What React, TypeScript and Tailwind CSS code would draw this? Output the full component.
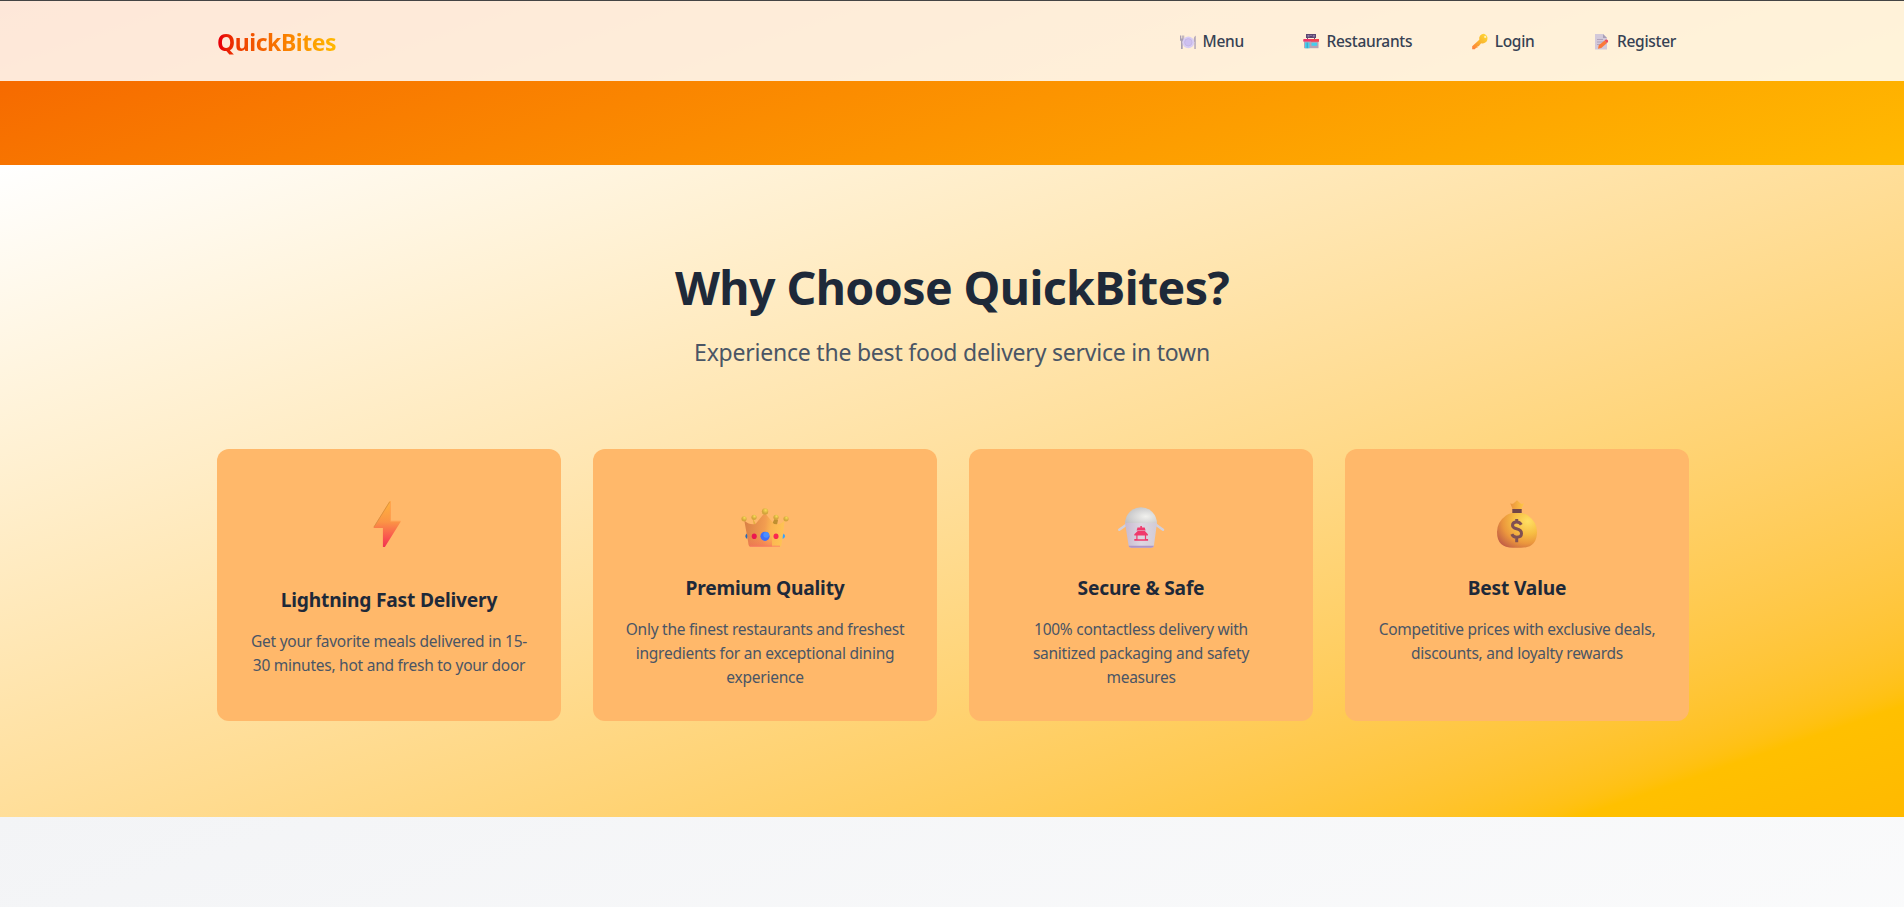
import React from "react";

const nav = [
  { label: "Menu", icon: <PlateIcon /> },
  { label: "Restaurants", icon: <ShopIcon /> },
  { label: "Login", icon: <KeyIcon /> },
  { label: "Register", icon: <MemoIcon /> },
];

const features = [
  { title: "Lightning Fast Delivery", text: "Get your favorite meals delivered in 15-\n30 minutes, hot and fresh to your door", icon: <BoltIcon />, gap: "mb-[38px]" },
  { title: "Premium Quality", text: "Only the finest restaurants and freshest\ningredients for an exceptional dining\nexperience", icon: <CrownIcon />, gap: "mb-[26px]" },
  { title: "Secure & Safe", text: "100% contactless delivery with\nsanitized packaging and safety\nmeasures", icon: <TakeoutIcon />, gap: "mb-[26px]" },
  { title: "Best Value", text: "Competitive prices with exclusive deals,\ndiscounts, and loyalty rewards", icon: <MoneyBagIcon />, gap: "mb-[26px]" },
];

function PlateIcon() {
  return (
    <svg viewBox="0 0 18 18" className="h-[18px] w-[18px]">
      <path d="M1 2.500v4.500q0 1 1 1V16h1.700V8q1.500 0 1.500-1V2.500H4.300v3h-.6v-3h-.9v3h-.7v-3z" fill="#aaa0b2" />
      <path d="M15.300 16V9q-.6-.5-.6-2.500 0-3 2.100-4V16z" fill="#b5a8b8" />
      <circle cx="9.300" cy="9.300" r="5.900" fill="#d9cdf4" />
      <circle cx="9.300" cy="9.300" r="3.700" fill="#cec0f1" stroke="#bfb2e0" strokeWidth=".7" />
    </svg>
  );
}

function ShopIcon() {
  return (
    <svg viewBox="0 0 18 18" className="h-[18px] w-[18px]">
      <path d="M5 4h1v3H5zM12 4h1v3h-1z" fill="#6b5876" />
      <rect x="4" y="1" width="10" height="4" fill="#5b4670" />
      <path d="M5.500 2.500h2M8.200 2.500h1.600M10.800 2.500h2M5.500 3.700h2M10.800 3.700h2" stroke="#a894bd" strokeWidth=".7" />
      <rect x="2" y="7.500" width="14.500" height="7.700" fill="#b7a3b5" />
      <path d="M1.500 6h15.500v2.500H1z" fill="#f0376a" />
      <path d="M9 6h8v2.500H9z" fill="#f4434f" />
      <path d="M3 9.500h4.500v5.700H3zM9.500 9.800h5.600v3H9.500z" fill="#45cfee" />
      <path d="M5.200 9.500v5.700" stroke="#3787b0" strokeWidth=".7" />
    </svg>
  );
}

function KeyIcon() {
  return (
    <svg viewBox="0 0 18 18" className="h-[18px] w-[18px]">
      <defs>
        <linearGradient id="key" x1="1" y1="0" x2="0" y2="1">
          <stop stopColor="#ffdc37" />
          <stop offset=".5" stopColor="#f9b52e" />
          <stop offset="1" stopColor="#ff7b3f" />
        </linearGradient>
      </defs>
      <path d="M13 .7a4.800 4.800 0 0 0-4.700 6L1.200 13.300v3h2.600l1.300-1.500h1.400v-1.600h1.300l2.300-3A4.800 4.800 0 1 0 13 .7z" fill="url(#key)" />
      <circle cx="14.200" cy="3.900" r="1.100" fill="#fff0bc" />
    </svg>
  );
}

function MemoIcon() {
  return (
    <svg viewBox="0 0 18 18" className="h-[18px] w-[18px]">
      <path d="M2 1h8l4 4v11.500H2z" fill="#d3c9da" />
      <path d="M10 1v4h4z" fill="#a99fb7" />
      <path d="M4 6.500h6M4 9h7M4 11.500h3" stroke="#aa9bb4" strokeWidth=".8" />
      <path d="m5 15.700.7-3.400 6-4.900 2.300 2.600-5.700 4.900z" fill="#fb7939" />
      <path d="m11.600 7.500 1.200-.9q1-.5 1.900.4t.2 2.200l-1.100.9z" fill="#ef4d5a" />
    </svg>
  );
}

function BoltIcon() {
  return (
    <svg viewBox="0 0 48 48" className="h-12 w-12">
      <defs>
        <linearGradient id="bolt" x1="0" y1="0" x2="0" y2="1">
          <stop stopColor="#ffb43d" />
          <stop offset=".45" stopColor="#fb9445" />
          <stop offset=".8" stopColor="#f95350" />
          <stop offset="1" stopColor="#f13350" />
        </linearGradient>
      </defs>
      <path d="M24.500 1.200h1.300v20h9.200q.8 0 .5.700L20.200 46.500q-.3.600-1 .5h-1.300V28H9.100q-.8 0-.4-.8z" fill="url(#bolt)" />
      <path d="M25.300 1.500v19.700H35.500" stroke="#ff9e53" strokeWidth=".8" fill="none" />
      <path d="M8.900 27 24.700 1.800" stroke="#d58b3d" strokeWidth=".8" />
    </svg>
  );
}

function CrownIcon() {
  return (
    <svg viewBox="0 0 48 48" className="h-12 w-12">
      <defs>
        <linearGradient id="crown" x1="0" y1=".4" x2="1" y2=".5">
          <stop stopColor="#d98046" />
          <stop offset=".5" stopColor="#f29d50" />
          <stop offset=".65" stopColor="#fab451" />
          <stop offset="1" stopColor="#ffc454" />
        </linearGradient>
        <linearGradient id="crownBase" x1="0" y1="0" x2="0" y2="1">
          <stop offset=".3" stopColor="#ff7358" stopOpacity="0" />
          <stop offset="1" stopColor="#f46959" stopOpacity=".6" />
        </linearGradient>
        <radialGradient id="crownBall" cx=".6" cy=".3">
          <stop stopColor="#f9dd55" />
          <stop offset="1" stopColor="#d3a53c" />
        </radialGradient>
      </defs>
      <path d="m11.500 18 1.500 8h3z" fill="#e4af42" />
      <path d="m31 24 3-6 3 2-1 5z" fill="#bf9030" />
      <path d="M3.300 20.500Q9 25.500 14.500 24L22.500 14.300q1.200-1.200 2.400 0L33 24q5.500 1.500 10.700-3.500L40.400 45q-.2 1.500-1.500 1.500H9.400Q8 46.500 7.700 45z" fill="url(#crown)" />
      <path d="M5.500 30H31v16.500H9.400Q8 46.500 7.700 45z" fill="url(#crownBase)" />
      <path d="M9 46.200h30" stroke="#fa7967" strokeWidth=".8" />
      <circle cx="24" cy="11.500" r="3.200" fill="url(#crownBall)" />
      <circle cx="3" cy="18.800" r="2.600" fill="url(#crownBall)" />
      <circle cx="45" cy="18.800" r="2.600" fill="url(#crownBall)" />
      <circle cx="13" cy="17.300" r="2.600" fill="url(#crownBall)" />
      <circle cx="35" cy="17.300" r="2.600" fill="url(#crownBall)" />
      <circle cx="24" cy="36.300" r="4.600" fill="#3f6ef8" />
      <circle cx="25.200" cy="34.800" r="2.900" fill="#4a8fff" />
      <ellipse cx="13.200" cy="36.300" rx="2.500" ry="2.800" fill="#ec174f" />
      <ellipse cx="35" cy="36.300" rx="2.500" ry="2.800" fill="#fa284f" />
      <path d="M5.700 33.500q-3 2.800.4 5.600.8-2.800-.4-5.600" fill="#2769ba" />
      <path d="M42.500 33.500q3.500 2.800-.8 5.600-.5-2.800.8-5.600" fill="#35a4ff" />
    </svg>
  );
}

function TakeoutIcon() {
  return (
    <svg viewBox="0 0 48 48" className="h-12 w-12">
      <defs>
        <radialGradient id="rice" cx=".65" cy=".55" r=".7">
          <stop stopColor="#f1f1ee" />
          <stop offset="1" stopColor="#bfbfc2" />
        </radialGradient>
        <linearGradient id="box" x1="0" y1="0" x2="1" y2="0">
          <stop stopColor="#c7b9d0" />
          <stop offset=".5" stopColor="#ddd7e1" />
          <stop offset="1" stopColor="#d2cbd6" />
        </linearGradient>
      </defs>
      <path d="m2.300 29.800 7-5M46 29.800l-7-5" stroke="#d2cfdb" strokeWidth="2.500" strokeLinecap="round" />
      <path d="M8 24a16 16.800 0 0 1 32 0z" fill="url(#rice)" />
      <path d="M8 22.800q16 .6 32 0L37 45q-.3 2.800-3 2.800H14.500q-2.700 0-3-2.800z" fill="url(#box)" />
      <path d="M11.500 45.800Q12 47.800 14.500 47.800H34q2.600 0 3-2z" fill="#ad94c7" />
      <path d="M23.300 26h1.600v1.500h2.800l.9 3h-9l.9-3h2.800zM20.700 31h7.200l3 3.300v1.300H17.300v-1.300zM19.300 35.500h1.200v3.800h7.400v-3.800h1.200V39h2v1.800H17.300V39h2z" fill="#f0396c" />
    </svg>
  );
}

function MoneyBagIcon() {
  return (
    <svg viewBox="0 0 48 48" className="h-12 w-12">
      <defs>
        <radialGradient id="bag" cx=".77" cy=".25" r=".9">
          <stop stopColor="#ffe064" />
          <stop offset=".4" stopColor="#f7bd43" />
          <stop offset=".7" stopColor="#eb963d" />
          <stop offset="1" stopColor="#c46145" />
        </radialGradient>
        <linearGradient id="bagTop" x1="0" y1="0" x2="1" y2="0">
          <stop stopColor="#eb923d" />
          <stop offset="1" stopColor="#ffc846" />
        </linearGradient>
      </defs>
      <path d="M17.200 3.200q2 1.100 3.500 0l3.300-3 3.300 3q1.500 1 3.700 0L27.900 10h-8z" fill="url(#bagTop)" />
      <path d="M4 32q0-10 9-16.500 4-3 11-3t11 3Q44 22 44 32q0 15.800-16 15.800h-8Q4 47.800 4 32z" fill="url(#bag)" />
      <path d="M19.300 9h9.400v4h-9.400z" fill="#734646" />
      <path d="M28.300 24.700Q26.800 22 23.500 22q-4 0-4 3.300 0 2.500 4 3.500 5 1.200 5 4.700 0 3.700-4.900 3.700-3.500 0-4.800-3M23.700 19v3m0 15.200v5" stroke="#805052" strokeWidth="3" fill="none" />
    </svg>
  );
}

export default function App() {
  return (
    <div className="h-[907px] overflow-hidden font-['Noto_Sans',sans-serif]">
      <div className="h-[165px] bg-linear-to-br from-red-600 to-amber-400 bg-[length:100%_660px] bg-bottom">
        <header className="h-[81px] border-t border-[#444444] bg-white/85 bg-clip-padding">
          <div className="ml-[217px] flex h-20 w-[1472px] items-center justify-between">
            <div className="bg-linear-to-r from-red-600 to-amber-400 bg-clip-text pt-0.5 text-[23px] font-bold tracking-[-0.45px] text-transparent">QuickBites</div>
            <nav className="flex items-center pt-0.5">
              {nav.map((n) => (
                <a key={n.label} className="mr-[13px] ml-[45.5px] flex items-center gap-1.5 text-[15.5px] font-medium tracking-[-0.3px] text-gray-700">
                  {n.icon}<span>{n.label}</span>
                </a>
              ))}
            </nav>
          </div>
        </header>
      </div>
      <section className="h-[652px] bg-linear-to-br from-white to-amber-400 pt-24 text-center">
        <h2 className="text-[46.5px] leading-[52px] font-bold tracking-[-0.6px] text-gray-800">Why Choose QuickBites?</h2>
        <p className="mt-[23px] text-[23px] leading-8 tracking-[-0.22px] text-gray-600">Experience the best food delivery service in town</p>
        <div className="mt-[81px] ml-[217px] grid w-[1472px] grid-cols-4 gap-8">
          {features.map((f) => (
            <article key={f.title} className="flex h-[272px] flex-col items-center rounded-xl bg-[#ffb86a] px-7 pt-[51px]">
              <div className={f.gap}>{f.icon}</div>
              <h3 className="mb-[15px] text-[19.2px] leading-7 font-bold tracking-[-0.2px] text-gray-800">{f.title}</h3>
              <p className="text-[15.5px] leading-6 tracking-[-0.25px] whitespace-pre-line text-gray-600">{f.text}</p>
            </article>
          ))}
        </div>
      </section>
      <div className="h-[90px] bg-linear-to-br from-gray-100 to-white bg-[length:100%_650px] bg-top bg-no-repeat" />
    </div>
  );
}
